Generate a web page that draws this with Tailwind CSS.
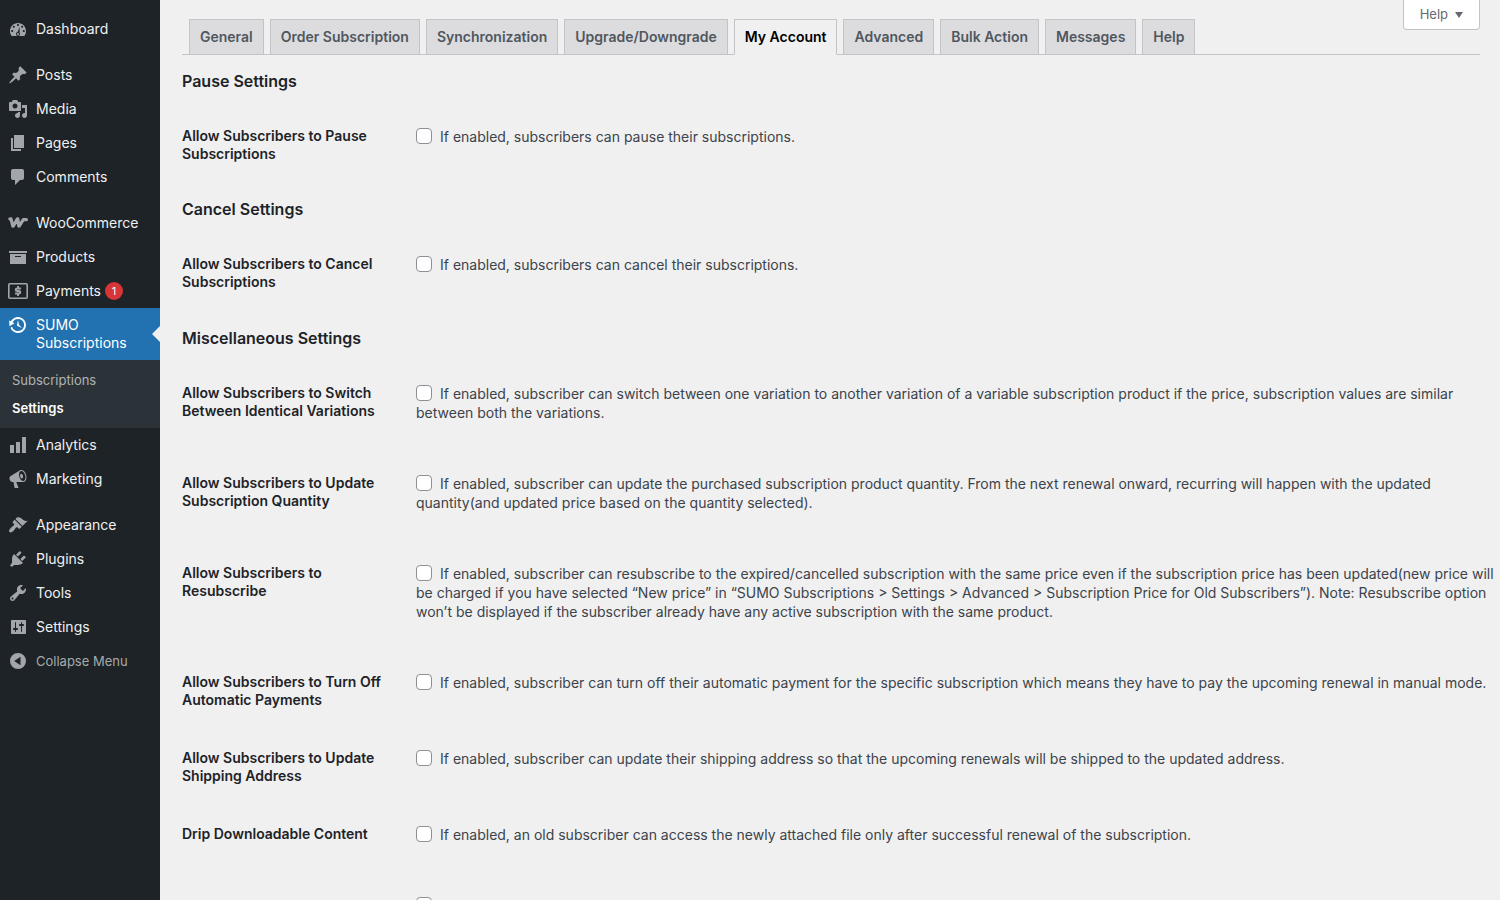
<!DOCTYPE html>
<html lang="en">
<head>
<meta charset="utf-8">
<meta name="viewport" content="width=device-width, initial-scale=1">
<title>SUMO Subscriptions – My Account</title>
<script src="https://cdn.jsdelivr.net/npm/@tailwindcss/browser@4"></script>
</head>
<body class="flex h-screen overflow-hidden bg-[#f0f0f1] font-['Inter','Liberation_Sans',sans-serif] text-sm text-[#3c434a]">

<nav aria-label="Main menu" class="w-40 shrink-0 bg-[#1d2327] pt-3 text-sm leading-[18px] text-[#f0f0f1]">
  <ul>
    <li><a href="#" class="flex gap-2 px-2 py-2"><svg class="-my-px size-5 shrink-0 fill-[#a2a6aa]" viewBox="0 0 20 20" fill-rule="evenodd"><path d="M3.76 17h12.48c1.1-1.37 1.76-3.11 1.76-5 0-4.42-3.58-8-8-8s-8 3.58-8 8c0 1.89.66 3.63 1.76 5zM10 5c.55 0 1 .45 1 1s-.45 1-1 1-1-.45-1-1 .45-1 1-1zM5.8 6.8c.55 0 1 .45 1 1s-.45 1-1 1-1-.45-1-1 .45-1 1-1zm8.4 0c.55 0 1 .45 1 1s-.45 1-1 1-1-.45-1-1 .45-1 1-1zM4.2 11c.55 0 1 .45 1 1s-.45 1-1 1-1-.45-1-1 .45-1 1-1zm11.6 0c.55 0 1 .45 1 1s-.45 1-1 1-1-.45-1-1 .45-1 1-1zM11.8 8l-.3 5.600c.3.4.5.9.5 1.400 0 1.100-.9 2-2 2s-2-.9-2-2c0-1 .7-1.800 1.600-1.950zM10 14c-.55 0-1 .45-1 1s.45 1 1 1 1-.45 1-1-.45-1-1-1z"/></svg>Dashboard</a></li>
    <li class="mt-3"><a href="#" class="flex gap-2 px-2 py-2"><svg class="-my-px size-5 shrink-0 fill-[#a2a6aa]" viewBox="0 0 20 20"><path d="M10.44 3.02l1.82-1.82 6.36 6.35-1.83 1.82c-1.05-.68-2.48-.57-3.41.36l-.75.75c-.92.93-1.04 2.35-.35 3.41l-1.83 1.82-2.41-2.41-2.8 2.79c-.42.42-3.38 2.71-3.8 2.29s1.86-3.39 2.28-3.81l2.79-2.79L4.1 9.36l1.83-1.82c1.05.69 2.48.57 3.4-.36l.75-.75c.93-.92 1.05-2.35.36-3.41z"/></svg>Posts</a></li>
    <li><a href="#" class="flex gap-2 px-2 py-2"><svg class="-my-px size-5 shrink-0 fill-[#a2a6aa]" viewBox="0 0 20 20" fill-rule="evenodd"><path d="M13 11V4c0-.55-.45-1-1-1h-1.67L9 1H5L3.67 3H2c-.55 0-1 .45-1 1v7c0 .55.45 1 1 1h10c.55 0 1-.45 1-1zM7 4.500c1.380 0 2.500 1.120 2.500 2.500S8.380 9.500 7 9.500 4.500 8.380 4.500 7 5.620 4.500 7 4.500zM14 6h5v10.500c0 1.380-1.120 2.500-2.500 2.500S14 17.880 14 16.500s1.120-2.500 2.500-2.500c.17 0 .34.02.5.05V9h-3V6zm-4 8.050V13h2v3.500c0 1.380-1.120 2.500-2.500 2.500S7 17.880 7 16.500 8.120 14 9.500 14c.17 0 .34.02.5.05z"/></svg>Media</a></li>
    <li><a href="#" class="flex gap-2 px-2 py-2"><svg class="-my-px size-5 shrink-0 fill-[#a2a6aa]" viewBox="0 0 20 20"><path d="M6 15V2h10v13H6zm-1 1h8v2H3V5h2v11z"/></svg>Pages</a></li>
    <li><a href="#" class="flex gap-2 px-2 py-2"><svg class="-my-px size-5 shrink-0 fill-[#a2a6aa]" viewBox="0 0 20 20"><path d="M5 2h9c1.100 0 2 .9 2 2v7c0 1.100-.9 2-2 2h-2l-5 5v-5H5c-1.100 0-2-.9-2-2V4c0-1.100.9-2 2-2z"/></svg>Comments</a></li>
    <li class="mt-3"><a href="#" class="flex gap-2 px-2 py-2"><svg class="-my-px size-5 shrink-0" viewBox="0 0 20 20" fill="none" stroke="#a2a6aa" stroke-linejoin="round" stroke-linecap="round"><path d="M1.900 5.900H3l1.800 7.200h.4l4.200-7.200h.4l1 7.200h.4l4.100-6.400h3.100" stroke-width="3.200"/></svg>WooCommerce</a></li>
    <li><a href="#" class="flex gap-2 px-2 py-2"><svg class="-my-px size-5 shrink-0 fill-[#a2a6aa]" viewBox="0 0 20 20"><path d="M19 4v2H1V4h18zM2 7h16v10H2V7zm11 3V9H7v1h6z"/></svg>Products</a></li>
    <li><a href="#" class="flex gap-2 px-2 py-2"><svg class="-my-px size-5 shrink-0" viewBox="0 0 20 20" fill="none" stroke="#a2a6aa"><rect x="0.800" y="2.800" width="18.400" height="14.400" rx="1" stroke-width="1.600"/><path d="M12.900 7.500H9.200c-2 0-2 2.500 0 2.500h1.600c2 0 2 2.500 0 2.500H7.100M10 5v2.500M10 12.500V15" stroke-width="1.900"/></svg><span>Payments</span><span class="-ml-1 flex size-[18px] items-center justify-center rounded-full bg-[#d63638] text-[11px] text-white">1</span></a></li>
    <li class="relative bg-[#2271b1] text-white"><a href="#" class="flex gap-2 px-2 py-2"><svg class="-my-px size-5 shrink-0 fill-white" viewBox="0 0 20 20"><path d="M13.650 2.880c3.930 2.010 5.480 6.840 3.470 10.770s-6.830 5.480-10.770 3.470c-1.870-.96-3.200-2.560-3.860-4.400l1.640-1.030c.45 1.570 1.520 2.950 3.080 3.760 3.010 1.540 6.690.35 8.230-2.660 1.550-3.010.36-6.690-2.650-8.240C9.780 3.010 6.100 4.200 4.560 7.210l1.880.97-4.950 3.080-.39-5.820 1.780.91C4.900 2.400 9.750.89 13.650 2.880zm-4.360 7.830C9.110 10.530 9 10.280 9 10c0-.07.03-.12.04-.19h-.01L10 5l.97 4.810L14 13l-4.500-2.120.02-.02c-.08-.04-.16-.09-.23-.15z"/></svg><span>SUMO Subscriptions</span></a>
      <span class="absolute top-1/2 right-0 size-0 -translate-y-1/2 border-8 border-transparent border-r-[#f0f0f1]"></span></li>
    <li class="bg-[#2c3338] py-[6px] text-[13px]">
      <ul>
        <li><a href="#" class="block px-3 py-[5px] text-[#b0b3b6]">Subscriptions</a></li>
        <li><a href="#" aria-current="page" class="block px-3 py-[5px] font-semibold text-white">Settings</a></li>
      </ul>
    </li>
    <li><a href="#" class="flex gap-2 px-2 py-2"><svg class="-my-px size-5 shrink-0 fill-[#a2a6aa]" viewBox="0 0 20 20"><path d="M18 18V2h-4v16h4zm-6 0V7H8v11h4zm-6 0v-8H2v8h4z"/></svg>Analytics</a></li>
    <li><a href="#" class="flex gap-2 px-2 py-2"><svg class="-my-px size-5 shrink-0 fill-[#a2a6aa]" viewBox="0 0 20 20" fill-rule="evenodd"><path d="M18.150 5.940c.46 1.620.38 3.220-.02 4.480-.42 1.280-1.260 2.180-2.300 2.480-.16.06-.26.06-.4.06-.06.02-.12.02-.18.02-.06.02-.14.02-.22.02h-6.800l2.220 5.500c.02.14-.06.26-.14.34-.08.1-.24.16-.34.16H6.950c-.1 0-.26-.06-.34-.16-.08-.08-.16-.2-.14-.34l-1-5.500H4.250l-.02-.02c-.5.06-1.080-.18-1.540-.62s-.88-1.080-1.060-1.880c-.24-.8-.2-1.560-.02-2.200.18-.62.58-1.080 1.060-1.300l.02-.02 9-5.400c.1-.06.18-.1.24-.16.06-.04.14-.08.24-.12.16-.08.28-.12.5-.18 1.040-.3 2.240.1 3.220.98s1.840 2.240 2.260 3.860zm-2.580 5.980h-.02c.4-.1.74-.34 1.040-.7.58-.7.86-1.760.86-3.040 0-.64-.1-1.300-.28-1.980-.34-1.360-1.020-2.500-1.780-3.240s-1.680-1.100-2.460-.88c-.82.22-1.400.96-1.700 2-.32 1.040-.28 2.360.06 3.720.38 1.360 1 2.500 1.800 3.240.78.74 1.620 1.100 2.480.88zm-2.540-7.080c.22-.04.42-.02.62.04.38.16.76.48 1.020 1s.42 1.200.42 1.780c0 .3-.04.56-.12.8-.18.48-.44.84-.86.94-.34.1-.8-.06-1.140-.4s-.64-.86-.78-1.500c-.18-.62-.12-1.240.02-1.720s.48-.84.82-.94z"/></svg>Marketing</a></li>
    <li class="mt-3"><a href="#" class="flex gap-2 px-2 py-2"><svg class="-my-px size-5 shrink-0 fill-[#a2a6aa]" viewBox="0 0 20 20"><path d="M14.480 11.060L7.410 3.990l1.500-1.500c.5-.56 2.300-.47 3.510.32 1.210.8 1.430 1.280 2.910 2.100 1.180.64 2.450 1.260 4.450.85zm-.71.71L6.700 4.700 4.930 6.470c-.39.39-.39 1.020 0 1.410l1.060 1.060c.39.39.39 1.030 0 1.420-.6.6-1.430 1.110-2.210 1.690-.35.26-.7.53-1.010.84C1.430 14.230.4 16.080 1.400 17.070c.99 1 2.840-.03 4.180-1.360.31-.31.58-.66.85-1.020.57-.78 1.080-1.610 1.690-2.210.39-.39 1.020-.39 1.410 0l1.060 1.060c.39.39 1.020.39 1.410 0z"/></svg>Appearance</a></li>
    <li><a href="#" class="flex gap-2 px-2 py-2"><svg class="-my-px size-5 shrink-0 fill-[#a2a6aa]" viewBox="0 0 20 20"><path d="M13.110 4.360L9.870 7.600 8 5.730l3.240-3.240c.35-.34 1.050-.2 1.560.32.52.51.66 1.210.31 1.550zm-8 1.770l.91-1.120 9.010 9.010-1.190.84c-.71.71-2.630 1.160-3.820 1.160H6.140L4.900 17.260c-.59.59-1.540.59-2.120 0-.59-.58-.59-1.530 0-2.120l1.240-1.240v-3.880c0-1.130.4-3.190 1.090-3.890zm7.260 3.970l3.240-3.240c.34-.35 1.040-.21 1.550.31.52.51.66 1.210.31 1.550l-3.240 3.250z"/></svg>Plugins</a></li>
    <li><a href="#" class="flex gap-2 px-2 py-2"><svg class="-my-px size-5 shrink-0 fill-[#a2a6aa]" viewBox="0 0 20 20" fill-rule="evenodd"><path d="M16.680 9.770c-1.340 1.340-3.300 1.670-4.950.99l-5.410 6.520c-.99.99-2.590.99-3.580 0s-.99-2.590 0-3.570l6.520-5.420c-.68-1.650-.35-3.610.99-4.950 1.280-1.280 3.120-1.620 4.720-1.060l-2.890 2.890 2.820 2.820 2.860-2.870c.53 1.580.18 3.390-1.080 4.650zM3.810 16.210c.4.39 1.040.39 1.430 0 .4-.4.4-1.040 0-1.430-.39-.4-1.030-.4-1.430 0-.39.39-.39 1.030 0 1.430z"/></svg>Tools</a></li>
    <li><a href="#" class="flex gap-2 px-2 py-2"><svg class="-my-px size-5 shrink-0 fill-[#a2a6aa]" viewBox="0 0 20 20" fill-rule="evenodd"><path d="M18 16V4c0-.55-.45-1-1-1H4c-.55 0-1 .45-1 1v12c0 .55.45 1 1 1h13c.55 0 1-.45 1-1zM8 11h1c.55 0 1 .45 1 1s-.45 1-1 1H8v1.500c0 .28-.22.5-.5.5s-.5-.22-.5-.5V13H6c-.55 0-1-.45-1-1s.45-1 1-1h1V5.500c0-.28.22-.5.5-.5s.5.22.5.5V11zm5-2h-1c-.55 0-1-.45-1-1s.45-1 1-1h1V5.500c0-.28.22-.5.5-.5s.5.22.5.5V7h1c.55 0 1 .45 1 1s-.45 1-1 1h-1v5.500c0 .28-.22.5-.5.5s-.5-.22-.5-.5V9z"/></svg>Settings</a></li>
    <li><button type="button" class="flex w-full gap-2 px-2 py-2 text-left text-[13px] text-[#a7aaad]"><svg class="-my-px size-5 shrink-0 fill-[#a2a6aa]" viewBox="0 0 20 20" fill-rule="evenodd"><path d="M10 2a8 8 0 1 0 0 16 8 8 0 0 0 0-16zM12.500 5.800v8.400L6.200 10z"/></svg>Collapse Menu</button></li>
  </ul>
</nav>

<main class="min-w-0 flex-1 overflow-x-hidden overflow-y-auto pr-[2px] pl-[22px] [scrollbar-width:none]">
  <header class="mr-[18px] flex items-start justify-between border-b border-[#c3c4c7]">
    <nav aria-label="Settings tabs" class="-mb-px flex gap-1.5 pt-[19px] pl-[7px] text-sm leading-6 font-semibold whitespace-nowrap text-[#50575e]">
      <a href="#" class="border border-[#c3c4c7] bg-[#dcdcde] px-[10px] py-[5px]">General</a>
      <a href="#" class="border border-[#c3c4c7] bg-[#dcdcde] px-[10px] py-[5px]">Order Subscription</a>
      <a href="#" class="border border-[#c3c4c7] bg-[#dcdcde] px-[10px] py-[5px]">Synchronization</a>
      <a href="#" class="border border-[#c3c4c7] bg-[#dcdcde] px-[10px] py-[5px]">Upgrade/Downgrade</a>
      <a href="#" aria-current="page" class="border border-[#c3c4c7] border-b-[#f0f0f1] bg-[#f0f0f1] px-[10px] py-[5px] text-black">My Account</a>
      <a href="#" class="border border-[#c3c4c7] bg-[#dcdcde] px-[10px] py-[5px]">Advanced</a>
      <a href="#" class="border border-[#c3c4c7] bg-[#dcdcde] px-[10px] py-[5px]">Bulk Action</a>
      <a href="#" class="border border-[#c3c4c7] bg-[#dcdcde] px-[10px] py-[5px]">Messages</a>
      <a href="#" class="border border-[#c3c4c7] bg-[#dcdcde] px-[10px] py-[5px]">Help</a>
    </nav>
    <button type="button" class="flex h-[30px] items-center gap-[7px] rounded-b border border-t-0 border-[#c3c4c7] bg-white px-4 text-[13px] text-[#646970]">Help<svg class="h-[6px] w-2 fill-[#646970]" viewBox="0 0 8 6"><path d="M0 0h8L4 6z"/></svg></button>
  </header>

  <form>
    <h2 class="my-4 text-base leading-5 font-semibold text-[#1d2327]">Pause Settings</h2>
    <table class="w-full table-fixed text-left">
      <tbody class="align-top">
        <tr><th scope="row" class="w-56 py-5 pr-[10px] leading-[18px] font-semibold text-[#1d2327]"><label for="pause">Allow Subscribers to Pause Subscriptions</label></th>
          <td class="pt-5 pb-8 pl-[10px] leading-[19px]"><input id="pause" type="checkbox" class="-mt-1 mr-2 size-4 appearance-none rounded border border-[#8c8f94] bg-white align-middle"><span>If enabled, subscribers can pause their subscriptions.</span></td></tr>
      </tbody>
    </table>

    <h2 class="my-4 text-base leading-5 font-semibold text-[#1d2327]">Cancel Settings</h2>
    <table class="w-full table-fixed text-left">
      <tbody class="align-top">
        <tr><th scope="row" class="w-56 py-5 pr-[10px] leading-[18px] font-semibold text-[#1d2327]"><label for="cancel">Allow Subscribers to Cancel Subscriptions</label></th>
          <td class="pt-5 pb-8 pl-[10px] leading-[19px]"><input id="cancel" type="checkbox" class="-mt-1 mr-2 size-4 appearance-none rounded border border-[#8c8f94] bg-white align-middle"><span>If enabled, subscribers can cancel their subscriptions.</span></td></tr>
      </tbody>
    </table>

    <h2 class="mt-[17px] mb-4 text-base leading-5 font-semibold text-[#1d2327]">Miscellaneous Settings</h2>
    <table class="w-full table-fixed text-left">
      <tbody class="align-top">
        <tr><th scope="row" class="w-56 py-5 pr-[10px] leading-[18px] font-semibold text-[#1d2327]"><label for="switch">Allow Subscribers to Switch Between Identical Variations</label></th>
          <td class="pt-5 pb-8 pl-[10px] leading-[19px]"><input id="switch" type="checkbox" class="-mt-1 mr-2 size-4 appearance-none rounded border border-[#8c8f94] bg-white align-middle"><span>If enabled, subscriber can switch between one variation to another variation of a variable subscription product if the price, subscription values are similar between both the variations.</span></td></tr>
        <tr><th scope="row" class="py-5 pr-[10px] leading-[18px] font-semibold text-[#1d2327]"><label for="quantity">Allow Subscribers to Update Subscription Quantity</label></th>
          <td class="pt-5 pb-8 pl-[10px] leading-[19px]"><input id="quantity" type="checkbox" class="-mt-1 mr-2 size-4 appearance-none rounded border border-[#8c8f94] bg-white align-middle"><span>If enabled, subscriber can update the purchased subscription product quantity. From the next renewal onward, recurring will happen with the updated quantity(and updated price based on the quantity selected).</span></td></tr>
        <tr><th scope="row" class="py-5 pr-[10px] leading-[18px] font-semibold text-[#1d2327]"><label for="resubscribe">Allow Subscribers to Resubscribe</label></th>
          <td class="pt-5 pb-8 pl-[10px] leading-[19px]"><input id="resubscribe" type="checkbox" class="-mt-1 mr-2 size-4 appearance-none rounded border border-[#8c8f94] bg-white align-middle"><span>If enabled, subscriber can resubscribe to the expired/cancelled subscription with the same price even if the subscription price has been updated(new price will be charged if you have selected “New price” in “SUMO Subscriptions &gt; Settings &gt; Advanced &gt; Subscription Price for Old Subscribers”). Note: Resubscribe option won’t be displayed if the subscriber already have any active subscription with the same product.</span></td></tr>
        <tr><th scope="row" class="py-5 pr-[10px] leading-[18px] font-semibold text-[#1d2327]"><label for="autopay">Allow Subscribers to Turn Off Automatic Payments</label></th>
          <td class="pt-5 pb-8 pl-[10px] leading-[19px]"><input id="autopay" type="checkbox" class="-mt-1 mr-2 size-4 appearance-none rounded border border-[#8c8f94] bg-white align-middle"><span>If enabled, subscriber can turn off their automatic payment for the specific subscription which means they have to pay the upcoming renewal in manual mode.</span></td></tr>
        <tr><th scope="row" class="py-5 pr-[10px] leading-[18px] font-semibold text-[#1d2327]"><label for="shipping">Allow Subscribers to Update Shipping Address</label></th>
          <td class="pt-5 pb-8 pl-[10px] leading-[19px]"><input id="shipping" type="checkbox" class="-mt-1 mr-2 size-4 appearance-none rounded border border-[#8c8f94] bg-white align-middle"><span>If enabled, subscriber can update their shipping address so that the upcoming renewals will be shipped to the updated address.</span></td></tr>
        <tr><th scope="row" class="py-5 pr-[10px] leading-[18px] font-semibold text-[#1d2327]"><label for="drip">Drip Downloadable Content</label></th>
          <td class="pt-5 pb-8 pl-[10px] leading-[19px]"><input id="drip" type="checkbox" class="-mt-1 mr-2 size-4 appearance-none rounded border border-[#8c8f94] bg-white align-middle"><span>If enabled, an old subscriber can access the newly attached file only after successful renewal of the subscription.</span></td></tr>
        <tr><th scope="row" class="py-5"></th>
          <td class="pt-5 pb-8 pl-[10px] leading-[19px]"><input type="checkbox" aria-label="Additional option" class="-mt-1 mr-2 size-4 appearance-none rounded border border-[#8c8f94] bg-white align-middle"></td></tr>
      </tbody>
    </table>
  </form>
</main>
</body>
</html>
